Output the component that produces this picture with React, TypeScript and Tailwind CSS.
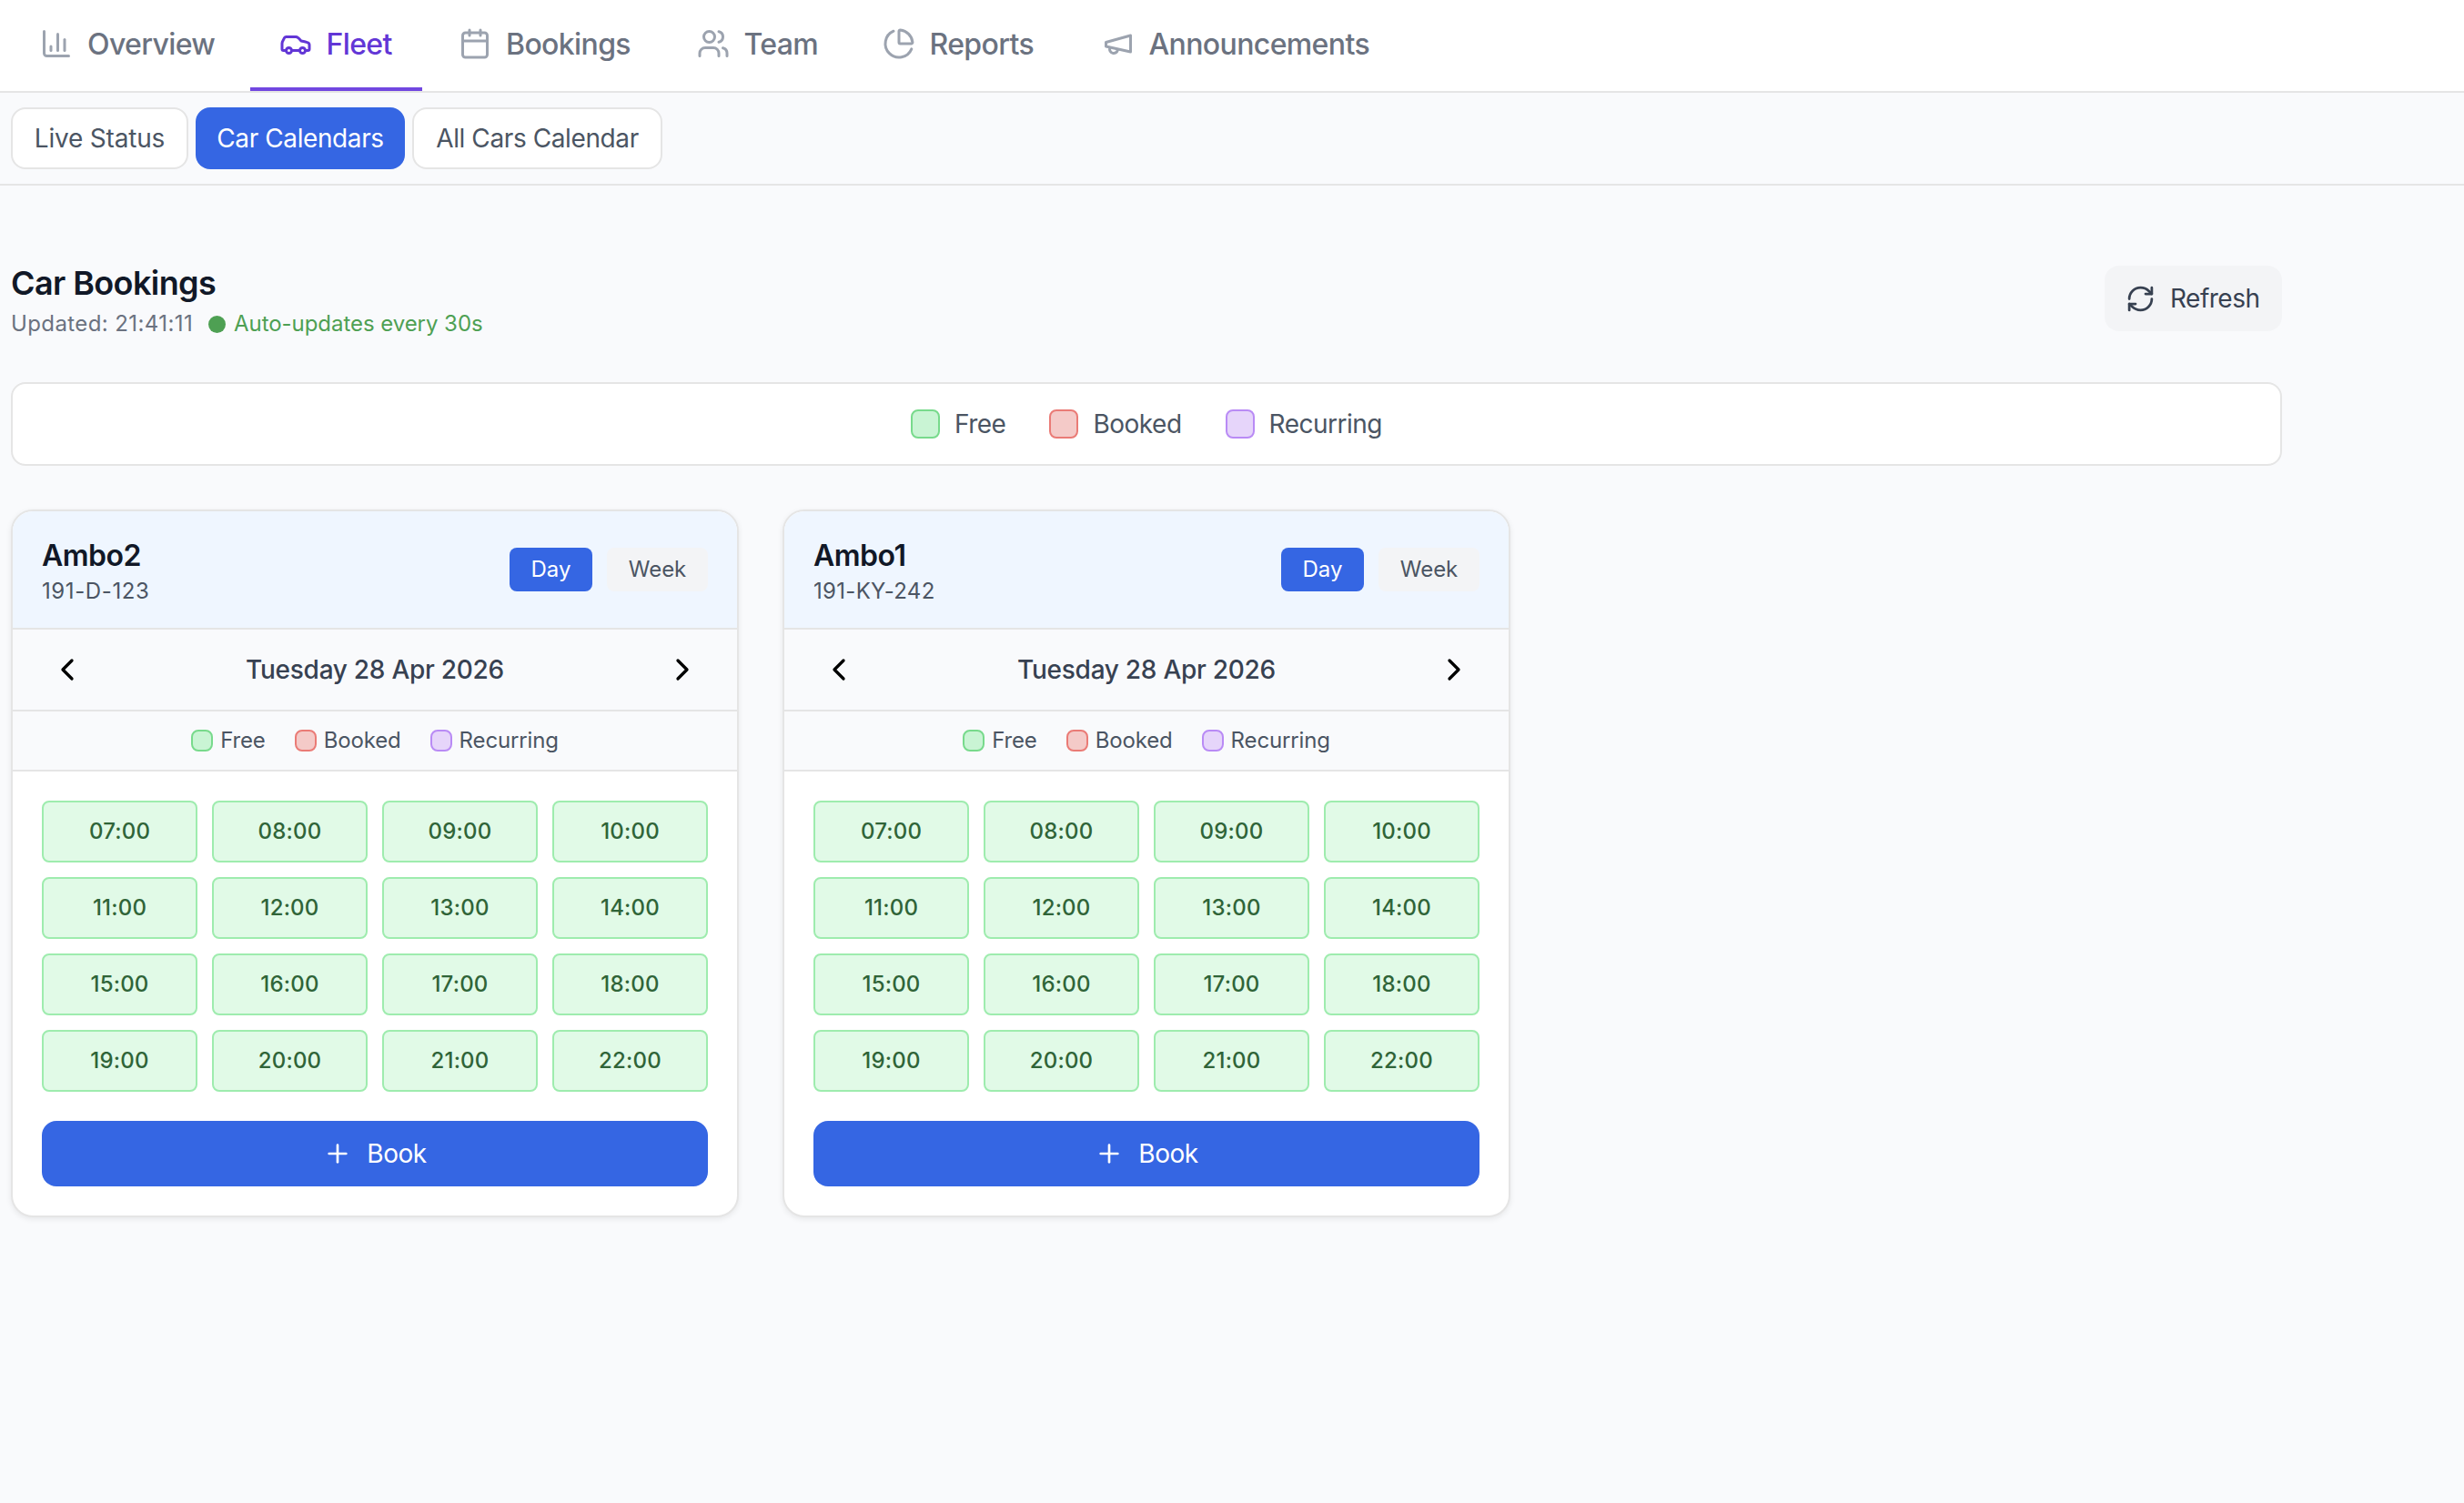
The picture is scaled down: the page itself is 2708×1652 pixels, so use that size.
import type { ReactNode } from "react";

function Icon({ className, children }: { className: string; children: ReactNode }) {
  return (
    <svg
      viewBox="0 0 24 24"
      fill="none"
      stroke="currentColor"
      strokeWidth="2"
      strokeLinecap="round"
      strokeLinejoin="round"
      className={`shrink-0 ${className}`}
    >
      {children}
    </svg>
  );
}

const tabs: { label: string; width: string; icon: ReactNode; active?: boolean }[] = [
  {
    label: "Overview",
    width: "w-[138.5px]",
    icon: (
      <>
        <path d="M3 3v16a2 2 0 0 0 2 2h16" />
        <path d="M18 17V9" />
        <path d="M13 17V5" />
        <path d="M8 17v-3" />
      </>
    ),
  },
  {
    label: "Fleet",
    width: "w-[73.5px]",
    active: true,
    icon: (
      <>
        <path d="M19 17h2c.6 0 1-.4 1-1v-3c0-.9-.7-1.7-1.5-1.9C18.7 10.6 16 10 16 10s-1.3-1.4-2.2-2.3c-.5-.4-1.1-.7-1.8-.7H5c-.6 0-1.1.4-1.4.9l-1.4 2.9A3.7 3.7 0 0 0 2 12v4c0 .6.4 1 1 1h2" />
        <circle cx="7" cy="17" r="2" />
        <path d="M9 17h6" />
        <circle cx="17" cy="17" r="2" />
      </>
    ),
  },
  {
    label: "Bookings",
    width: "w-[137.5px]",
    icon: (
      <>
        <path d="M8 2v4" />
        <path d="M16 2v4" />
        <rect width="18" height="18" x="3" y="4" rx="2" />
        <path d="M3 10h18" />
      </>
    ),
  },
  {
    label: "Team",
    width: "w-[80px]",
    icon: (
      <>
        <path d="M16 21v-2a4 4 0 0 0-4-4H6a4 4 0 0 0-4 4v2" />
        <circle cx="9" cy="7" r="4" />
        <path d="M22 21v-2a4 4 0 0 0-3-3.87" />
        <path d="M16 3.13a4 4 0 0 1 0 7.75" />
      </>
    ),
  },
  {
    label: "Reports",
    width: "w-[117px]",
    icon: (
      <>
        <path d="M21 12c.552 0 1.005-.449.95-.998a10 10 0 0 0-8.953-8.951c-.55-.055-.998.398-.998.95v8a1 1 0 0 0 1 1z" />
        <path d="M21.21 15.89A10 10 0 1 1 8 2.83" />
      </>
    ),
  },
  {
    label: "Announcements",
    width: "w-[242px]",
    icon: (
      <>
        <path d="m3 11 18-5v12L3 14v-3z" />
        <path d="M11.6 16.8a3 3 0 1 1-5.8-1.6" />
      </>
    ),
  },
];

const kinds = [
  { label: "Free", swatch: "border-[#78da8c] bg-[#c9f4d4]" },
  { label: "Booked", swatch: "border-[#ea7b76] bg-[#f4cac8]" },
  { label: "Recurring", swatch: "border-[#b98bf5] bg-[#e6d5fa]" },
];

const cars = [
  { name: "Ambo2", plate: "191-D-123", plateTracking: "tracking-[0.6px]" },
  { name: "Ambo1", plate: "191-KY-242", plateTracking: "tracking-[0.3px]" },
];

const hours = Array.from({ length: 16 }, (_, i) => `${String(i + 7).padStart(2, "0")}:00`);

function CarCard({ name, plate, plateTracking }: { name: string; plate: string; plateTracking: string }) {
  return (
    <section className="overflow-hidden rounded-[24px] border-2 border-[#e5e5e5] bg-white shadow-[0_2px_6px_rgba(0,0,0,0.08)]">
      <div className="flex h-[130px] items-center justify-between border-b-2 border-[#e5e5e5] bg-[#eff6ff] px-8">
        <div className="flex flex-col pt-[3px]">
          <h3 className="text-[32px] leading-[44px] font-semibold tracking-[-0.5px] text-[#111827]">{name}</h3>
          <p className={`mt-px text-[24px] leading-[32px] text-[#4b5563] ${plateTracking}`}>{plate}</p>
        </div>
        <div className="flex gap-4 text-[24px] leading-[48px]">
          <button className="h-12 w-[91px] rounded-lg bg-[#3566e3] text-white">Day</button>
          <button className="h-12 w-[111px] rounded-lg bg-[#f3f4f6] text-[#4b5563]">Week</button>
        </div>
      </div>
      <div className="flex h-[90px] items-center justify-between border-b-2 border-[#e5e5e5] bg-[#f9fafc] px-10 text-black">
        <Icon className="size-10">
          <path d="m15 18-6-6 6-6" />
        </Icon>
        <span className="text-[28px] leading-10 font-medium tracking-[-0.27px] text-[#374151]">
          Tuesday 28 Apr 2026
        </span>
        <Icon className="size-10">
          <path d="m9 18 6-6-6-6" />
        </Icon>
      </div>
      <div className="flex h-[66px] items-center justify-center gap-8 border-b-2 border-[#e5e5e5] bg-[#f9fafc]">
        {kinds.map((k) => (
          <div key={k.label} className="flex items-center gap-2">
            <span className={`size-6 rounded-lg border-2 ${k.swatch}`} />
            <span className="text-[24px] leading-8 tracking-[-0.15px] text-[#4b5563]">{k.label}</span>
          </div>
        ))}
      </div>
      <div className="p-8">
        <div className="grid grid-cols-4 gap-4">
          {hours.map((h) => (
            <button
              key={h}
              className="h-[68px] rounded-lg border-2 border-[#9eecae] bg-[#e1fae7] text-[24px] font-medium tracking-[0.2px] text-[#2f6438]"
            >
              {h}
            </button>
          ))}
        </div>
        <button className="mt-8 flex h-[72px] w-full items-center justify-center gap-4 rounded-2xl bg-[#3566e3] text-[28px] tracking-[-0.5px] text-white">
          <Icon className="size-8">
            <path d="M5 12h14" />
            <path d="M12 5v14" />
          </Icon>
          Book
        </button>
      </div>
    </section>
  );
}

export default function App() {
  return (
    <div className="min-h-[1652px] w-full bg-[#f9fafc] font-[Inter,sans-serif]">
      <nav className="flex h-[102px] gap-2 border-b-2 border-[#e5e5e5] bg-white pl-3">
        {tabs.map((t) => (
          <a
            key={t.label}
            className={`flex items-center gap-4 border-b-4 px-8 text-[32px] font-medium tracking-[-0.62px] whitespace-nowrap ${
              t.active ? "border-[#7147e0] text-[#6236d6]" : "border-transparent text-[#6b7280]"
            }`}
          >
            <Icon className={t.active ? "size-9" : "size-9 text-[#9ca3af]"}>{t.icon}</Icon>
            <span className={`pt-0.5 ${t.width}`}>{t.label}</span>
          </a>
        ))}
      </nav>
      <div className="flex h-[102px] items-center gap-2 border-b-2 border-[#e5e5e5] pl-3 text-[28px] tracking-[-0.4px] whitespace-nowrap">
        <button className="h-[68px] w-[195px] rounded-2xl border-2 border-[#e5e5e5] bg-white tracking-[-0.2px] text-[#4b5563]">
          Live Status
        </button>
        <button className="h-[68px] w-[230px] rounded-2xl bg-[#3566e3] text-white">Car Calendars</button>
        <button className="h-[68px] w-[275px] rounded-2xl border-2 border-[#e5e5e5] bg-white text-[#4b5563]">
          All Cars Calendar
        </button>
      </div>
      <main className="flex w-[2508px] flex-col pt-[84px] pl-3">
        <header className="flex h-20 items-start justify-between">
          <div className="flex flex-col">
            <h2 className="text-[36px] leading-[47px] font-semibold tracking-[-0.6px] text-[#111827]">Car Bookings</h2>
            <div className="mt-[5px] flex items-center text-[24px] leading-[32px]">
              <span className="w-[217px] tracking-[0.4px] text-[#6b7280]">Updated: 21:41:11</span>
              <span className="mr-[9px] size-[19px] rounded-full bg-[#4ea053]" />
              <span className="tracking-[-0.05px] text-[#4ea053]">Auto-updates every 30s</span>
            </div>
          </div>
          <button className="mt-1 flex h-[72px] w-[195px] items-center gap-4 rounded-2xl bg-[#f3f4f6] pl-[23px] text-[28px] tracking-[-0.5px] text-[#374151]">
            <Icon className="size-[33px]">
              <path d="M3 12a9 9 0 0 1 9-9 9.75 9.75 0 0 1 6.74 2.74L21 8" />
              <path d="M21 3v5h-5" />
              <path d="M21 12a9 9 0 0 1-9 9 9.75 9.75 0 0 1-6.74-2.74L3 16" />
              <path d="M8 16H3v5" />
            </Icon>
            Refresh
          </button>
        </header>
        <div className="mt-[52px] flex h-[92px] items-center justify-center gap-12 rounded-2xl border-2 border-[#e5e5e5] bg-white">
          {kinds.map((k) => (
            <div key={k.label} className="flex items-center gap-4">
              <span className={`size-8 rounded-lg border-2 ${k.swatch}`} />
              <span className="text-[28px] leading-10 tracking-[-0.5px] text-[#4b5563]">{k.label}</span>
            </div>
          ))}
        </div>
        <div className="mt-12 grid grid-cols-3 gap-12">
          {cars.map((c) => (
            <CarCard key={c.name} {...c} />
          ))}
        </div>
      </main>
    </div>
  );
}
